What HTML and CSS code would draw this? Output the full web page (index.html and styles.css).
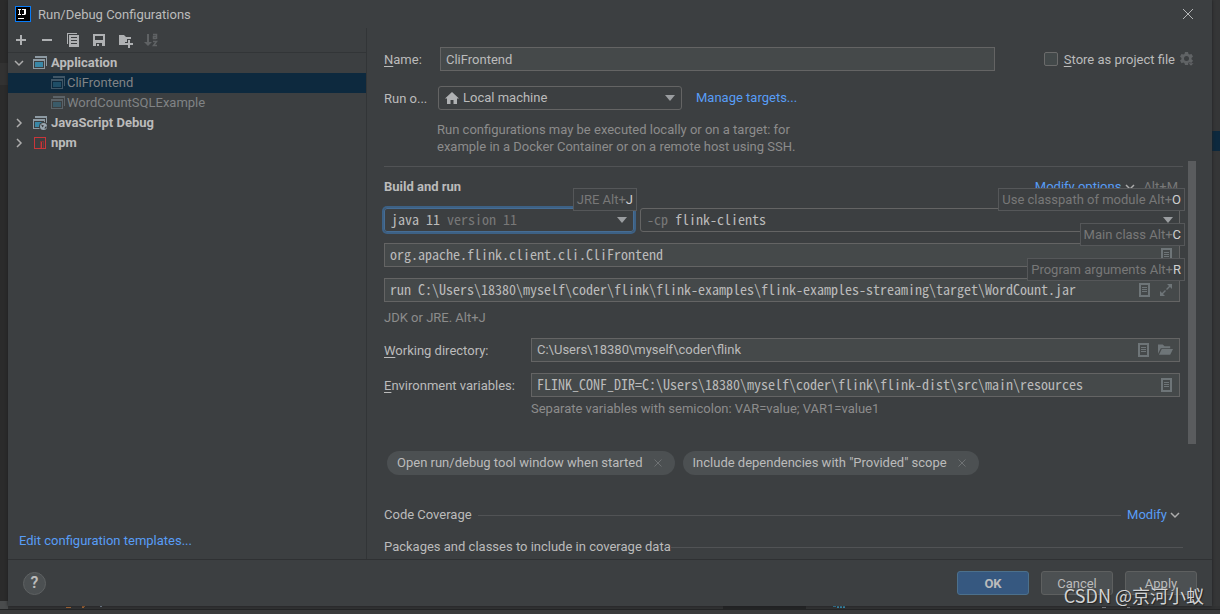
FILE: index.html
```html
<!DOCTYPE html>
<html lang="en">
<head>
<meta charset="utf-8">
<title>Run/Debug Configurations</title>
<link rel="stylesheet" href="styles.css">
</head>
<body>
<svg class="symbols" aria-hidden="true">
  <symbol id="i-app" viewBox="0 0 16 16"><path class="frame" d="M3 1h12v10h-1V3H3z"/><path class="frame" fill-rule="evenodd" d="M1 4h12v10H1zM2 6v7h10V6z"/><path class="pane" d="M3 7h8v5H3z"/></symbol>
  <symbol id="i-right" viewBox="0 0 10 10"><path d="M3 1l4 4-4 4" fill="none" stroke="#adadad" stroke-width="1.5"/></symbol>
  <symbol id="i-down" viewBox="0 0 10 10"><path d="M1 3l4 4 4-4" fill="none" stroke="#adadad" stroke-width="1.5"/></symbol>
  <symbol id="i-arrow" viewBox="0 0 10 6"><path d="M0 0h10L5 6z" fill="#9a9da0"/></symbol>
  <symbol id="i-doc" viewBox="0 0 12 14"><path fill="#6e7578" fill-rule="evenodd" d="M0 0h11v14H0zM2 2v10h7V2z"/><path fill="#6e7578" d="M3 4h5v1H3zM3 6h5v1H3zM3 8h5v1H3z"/></symbol>
  <symbol id="i-x" viewBox="0 0 8 8"><path d="M.5.5l7 7m0-7l-7 7" fill="none" stroke="#6e7173"/></symbol>
</svg>

<div class="backdrop" aria-hidden="true">
  <span class="caret-row"></span>
  <span class="gutter"></span>
  <span class="selection"></span>
  <svg class="code-edge" width="1220" height="13" viewBox="0 0 1220 13"><path fill="#323334" d="M0 5h1220v3H0z"/><path fill="#242526" d="M723 5h83v3h-83zM0 8h1220v1H0z"/><path fill="#4a4c4d" d="M0 0h8v8H0z"/><path fill="#b06b35" d="M66 6h5v1h-5zM82 5h3v1h-1v1h-2z"/><path fill="#8fa1b3" d="M100 5h2v1h-2z"/><path fill="#3993b8" d="M833 5h3v1h-3zM837 5h2v2h-2zM840 5h2v2h-2zM843 5h2v2h-2z"/><path fill="#84898d" d="M1102 6h4v1h-4zM1127 6h3v1h-3z"/></svg>
</div>

<main class="dialog">
  <header class="titlebar">
    <svg width="16" height="16" viewBox="0 0 16 16"><path fill="#087cfa" d="M0 0h16v16H0z"/><path fill="#000" d="M1 1h14v14H1z"/><path fill="#fff" d="M3 3h3v1H5v4h1v1H3V8h1V4H3zM7 3h4v5l-1 1H7V8h2V4H7zM3 12h6v1H3z"/></svg>
    <h1>Run/Debug Configurations</h1>
    <button class="icon-btn close" aria-label="Close"><svg width="12" height="12" viewBox="0 0 12 12"><path d="M1 1l10 10M11 1L1 11" stroke="#b4b6b7" fill="none"/></svg></button>
  </header>

  <div class="columns">
    <aside class="sidebar">
      <div class="toolbar">
        <button class="icon-btn" aria-label="Add"><svg width="16" height="16"><path fill="#afb1b3" d="M7 3h2v4h4v2H9v4H7V9H3V7h4z"/></svg></button>
        <button class="icon-btn" aria-label="Remove"><svg width="16" height="16"><path fill="#afb1b3" d="M3 7h10v2H3z"/></svg></button>
        <button class="icon-btn" aria-label="Copy"><svg width="16" height="16"><path fill="#afb1b3" d="M2 1h10v1H3v10H2z"/><path fill="#afb1b3" fill-rule="evenodd" d="M4 3h10v12H4zM6 5v1h6V5zM6 8v1h6V8zM6 11v1h6v-1z"/></svg></button>
        <button class="icon-btn" aria-label="Save"><svg width="16" height="16"><path fill="#afb1b3" fill-rule="evenodd" d="M2 2h12v12H2zM4 4v4h8V4zM5 11v3h1v-2h2v2h3v-3z"/></svg></button>
        <button class="icon-btn" aria-label="New folder"><svg width="16" height="16"><path fill="#afb1b3" d="M2 3h5l2 2h5v4h-3v2H9v2H2z"/><path fill="#3c3f41" d="M10 7h4v3h2v4h-2v2h-4v-2H8v-4h2z"/><path fill="#afb1b3" d="M11 8h2v3h3v2h-3v3h-2v-3H8v-2h3z"/></svg></button>
        <button class="icon-btn" aria-label="Sort" disabled><svg width="16" height="16"><path fill="#5f6264" d="M4 2h2v8h3l-4 4-4-4h3z"/><path fill="none" stroke="#5f6264" stroke-width="1.5" d="M10 2.500h3.500V7M13 4.500h-2.500v2H13M10 9.500h3.500l-3 4H14"/></svg></button>
      </div>
      <ul class="tree">
        <li class="node group"><svg class="twist" width="10" height="10"><use href="#i-down"/></svg><svg class="kind" width="16" height="16"><use href="#i-app"/></svg>Application</li>
        <li class="node leaf selected"><svg class="kind" width="16" height="16"><use href="#i-app"/></svg>CliFrontend</li>
        <li class="node leaf"><svg class="kind" width="16" height="16"><use href="#i-app"/></svg>WordCountSQLExample</li>
        <li class="node group"><svg class="twist" width="10" height="10"><use href="#i-right"/></svg><svg class="kind" width="16" height="16"><use href="#i-app"/><circle cx="11.500" cy="11.500" r="4.500" fill="#3c3f41"/><circle cx="11.500" cy="11.500" r="3.500" fill="#9aa7b0"/><path d="M9 9.500l3 1-1.500 2zM13 12l1.500-1v2l-2 1z" fill="#3c3f41"/></svg>JavaScript Debug</li>
        <li class="node group"><svg class="twist" width="10" height="10"><use href="#i-right"/></svg><svg class="kind" width="16" height="16"><path fill="#c9363a" fill-rule="evenodd" d="M2 2h12v12H2zM3 3v10h10V3z"/><path fill="#823234" d="M8 6h4v7h-1V7H9v6H8z"/><path fill="#c9363a" d="M9 7h1v6H9z"/></svg>npm</li>
      </ul>
      <a class="link templates" href="#">Edit configuration templates...</a>
    </aside>

    <section class="panel">
      <div class="head">
        <div class="row name-row">
          <label class="name-label" for="name"><u>N</u>ame:</label>
          <input class="box name-input" id="name" type="text" value="CliFrontend">
          <div class="store">
            <input id="store" type="checkbox"><label for="store"><u>S</u>tore as project file</label>
            <svg width="16" height="16"><path fill="#606365" fill-rule="evenodd" d="M6 1h3l.5 2 1 .6 2-.6 1.500 2.600L12.500 7v1.200L14 9.600l-1.500 2.600-2-.6-1 .6L9 14H6l-.5-1.800-1-.6-2 .6L1 9.600l1.500-1.400V7L1 5.600 2.500 3l2 .6 1-.6zM7.500 5a2.500 2.500 0 1 0 0 5 2.500 2.500 0 0 0 0-5z"/><path d="M9 12h6l-3 3z" fill="#606365" stroke="#3c3f41" stroke-width=".5"/></svg>
          </div>
        </div>
        <div class="row target-row">
          <label class="target-label" for="target">Run o...</label>
          <div class="combo target-combo">
            <svg width="14" height="12"><path fill="#afb1b3" d="M7 0l7 6.500h-2V12H8.500V8h-3v4H2V6.500H0z"/></svg>
            <select id="target"><option>Local machine</option></select>
            <svg class="arrow" width="10" height="6"><use href="#i-arrow"/></svg>
          </div>
          <a class="link" href="#">Manage targets...</a>
        </div>
        <p class="hint target-hint">Run configurations may be executed locally or on a target: for<br>example in a Docker Container or on a remote host using SSH.</p>
      </div>

      <div class="scroller">
        <div class="form">
          <div class="section-title">
            <h2>Build and run</h2>
            <a class="link" href="#">Modify options</a>
            <svg width="10" height="10"><use href="#i-down"/></svg>
            <span class="shortcut">Alt+M</span>
          </div>
          <div class="fields">
            <div class="pair">
              <div class="combo mono focused">
                <select aria-label="JRE"><option>java 11</option></select>
                <span class="muted">version 11</span>
                <svg class="arrow" width="10" height="6"><use href="#i-arrow"/></svg>
                <span class="tip">JRE Alt+<b>J</b></span>
              </div>
              <div class="combo mono classpath">
                <span class="muted">-cp</span>
                <select aria-label="Classpath of module"><option>flink-clients</option></select>
                <svg class="arrow" width="10" height="6"><use href="#i-arrow"/></svg>
                <span class="tip">Use classpath of module Alt+<b>O</b></span>
              </div>
            </div>
            <div class="box mono entry">
              <input type="text" aria-label="Main class" value="org.apache.flink.client.cli.CliFrontend">
              <button class="icon-btn" aria-label="Browse"><svg width="12" height="14"><use href="#i-doc"/></svg></button>
              <span class="tip">Main class Alt+<b>C</b></span>
            </div>
            <div class="box mono entry">
              <input type="text" aria-label="Program arguments" value="run C:\Users\18380\myself\coder\flink\flink-examples\flink-examples-streaming\target\WordCount.jar">
              <button class="icon-btn" aria-label="Macros"><svg width="12" height="14"><use href="#i-doc"/></svg></button>
              <button class="icon-btn" aria-label="Expand"><svg width="14" height="14"><path fill="#6e7578" d="M8 1h5v5l-2-2-3 3-1-1 3-3zM1 8l2 2 3-3 1 1-3 3 2 2H1z"/></svg></button>
              <span class="tip">Program arguments Alt+<b>R</b></span>
            </div>
          </div>
          <p class="hint jdk-hint">JDK or JRE. Alt+J</p>
          <div class="details">
            <label for="wd"><u>W</u>orking directory:</label>
            <div class="box entry">
              <input id="wd" type="text" value="C:\Users\18380\myself\coder\flink">
              <button class="icon-btn" aria-label="Macros"><svg width="12" height="14"><use href="#i-doc"/></svg></button>
              <button class="icon-btn" aria-label="Browse folder"><svg width="15" height="14" viewBox="0 0 16 14"><path fill="#6e7578" d="M0 1h5l2 2h6v2H3l-3 6z"/><path fill="#6e7578" d="M4 6h12l-3 6H1z"/></svg></button>
            </div>
            <label for="env"><u>E</u>nvironment variables:</label>
            <div class="box mono entry">
              <input id="env" type="text" value="FLINK_CONF_DIR=C:\Users\18380\myself\coder\flink\flink-dist\src\main\resources">
              <button class="icon-btn" aria-label="Edit variables"><svg width="12" height="14"><use href="#i-doc"/></svg></button>
            </div>
          </div>
          <p class="hint env-hint">Separate variables with semicolon: VAR=value; VAR1=value1</p>
          <div class="chips">
            <span class="chip">Open run/debug tool window when started<button class="icon-btn" aria-label="Remove option"><svg width="8" height="8"><use href="#i-x"/></svg></button></span>
            <span class="chip">Include dependencies with "Provided" scope<button class="icon-btn" aria-label="Remove option"><svg width="8" height="8"><use href="#i-x"/></svg></button></span>
          </div>
          <div class="rule-row coverage"><span>Code Coverage</span><i></i><a class="link" href="#">Modify</a><svg width="10" height="10"><use href="#i-down"/></svg></div>
          <div class="rule-row packages"><span>Packages and classes to include in coverage data</span><i></i></div>
        </div>
        <div class="thumb"></div>
      </div>
    </section>
  </div>

  <footer class="footer">
    <button class="help" aria-label="Help">?</button>
    <button class="btn primary">OK</button>
    <button class="btn">Cancel</button>
    <button class="btn">Apply</button>
  </footer>
</main>
<div class="watermark">CSDN @京河小蚁</div>
</body>
</html>
```

FILE: styles.css
```css
* { box-sizing: border-box; }
body {
  margin: 0;
  height: 100vh;
  padding: 0 8px 8px;
  overflow: hidden;
  background: #2b2b2b;
  color: #bbbbbb;
  font: 13px/18px Roboto, "Noto Sans CJK SC", sans-serif;
}
input, select, button { font: inherit; color: inherit; }
h1, h2, p, ul { margin: 0; padding: 0; font-size: 13px; }
u { text-underline-offset: 2px; }
svg { flex: none; display: block; }
.symbols { position: absolute; width: 0; height: 0; }

/* Editor showing round the edges of the dialog */
.backdrop { position: absolute; inset: 0; z-index: -1; background: linear-gradient(90deg, #2b2b2b 50%, #353637 50%); }
.caret-row, .gutter, .selection, .code-edge { position: absolute; }
.caret-row { left: 0; top: 63px; width: 8px; height: 22px; background: #323232; }
.gutter { left: 0; right: 0; bottom: 0; height: 5px; background: #3a3b3c; }
.selection { right: 0; top: 131px; width: 8px; height: 20px; background: #0d293e; }
.code-edge { left: 0; bottom: 0; }

.dialog {
  height: 100%;
  display: flex;
  flex-direction: column;
  background: #3c3f41;
  box-shadow: 0 0 3px #1e1f20;
}
.titlebar { height: 28px; flex: none; display: flex; align-items: center; gap: 7px; padding: 0 18px 0 7px; }
.titlebar h1 { flex: 1; padding-top: 2px; font-weight: 400; }
.icon-btn { display: flex; padding: 0; border: 0; background: none; }

.columns { flex: 1; min-height: 0; display: flex; border-bottom: 1px solid #2f3133; }
.sidebar { width: 359px; flex: none; display: flex; flex-direction: column; border-right: 1px solid #323537; }
.toolbar { height: 25px; display: flex; align-items: center; gap: 10px; padding-left: 5px; border-bottom: 1px solid #323537; }
.tree { list-style: none; flex: 1; }
.node { height: 20px; display: flex; align-items: center; }
.node .kind { margin-right: 3px; }
.group { padding-left: 6px; font-weight: 700; }
.twist { margin-right: 8px; }
.leaf { padding-left: 42px; color: #808385; }
.leaf .kind { margin-right: 1px; opacity: .4; }
.selected { background: #0d293e; }
.frame { fill: #8d9aa3; }
.pane { fill: #3a87a6; }
.link { color: #589df6; text-decoration: none; }
.templates { padding: 0 0 9px 11px; }

.panel { flex: 1; min-width: 0; display: flex; flex-direction: column; padding-left: 17px; }
.head { padding: 19px 0 6px; }
.row { display: flex; align-items: center; height: 24px; }
.row label, .details label { padding-top: 2px; }
.name-row { padding-right: 17px; }
.name-label { width: 56px; }
.box { height: 24px; background: #45494a; border: 1px solid #646464; }
.name-input { flex: 1; min-width: 0; padding: 0 5px; }
.store { display: flex; align-items: center; margin-left: 49px; }
.store input { appearance: none; width: 14px; height: 14px; margin: 0 6px 0 0; border: 1px solid #6b6b6b; border-radius: 2px; background: #43494a; }
.store svg { margin-left: 4px; }
.target-row { margin-top: 15px; }
.target-label { width: 54px; }
.combo { position: relative; height: 24px; display: flex; align-items: center; padding: 0 6px; border: 1px solid #646464; border-radius: 3px; }
.combo select { appearance: none; padding: 0; margin: 0; border: 0; background: none; outline: none; }
.arrow { margin-left: auto; }
.target-combo { width: 244px; margin-right: 14px; }
.target-combo select { margin-left: 4px; }
.hint { color: #8c8c8c; }
.target-hint { margin-top: 11px; padding-left: 53px; line-height: 17px; }

.scroller { flex: 1; min-height: 0; display: flex; align-items: flex-start; gap: 5px; padding-right: 16px; }
.form { flex: 1; min-width: 0; margin-top: 5px; border-top: 1px solid #515355; }
.thumb { width: 8px; height: 71%; background: #5a5c5e; }
.section-title { display: flex; align-items: center; padding: 11px 5px 0 0; }
.section-title h2 { flex: 1; }
.section-title svg { margin: 0 8px 0 4px; }
.shortcut, .muted { color: #787878; }
.fields { display: grid; gap: 11px; margin-top: 12px; padding-right: 3px; }
.pair { display: flex; gap: 6px; }
.mono { font-family: "Noto Sans Mono CJK SC", "DejaVu Sans Mono", monospace; font-size: 14px; }
.combo.mono select, .mono input, .mono .muted { padding-bottom: 2px; }
.combo.mono select { height: 20px; }
.focused { width: 250px; border-color: #466d94; box-shadow: 0 0 0 2px #3d6185; }
.focused .muted, .classpath select { margin-left: 7px; }
.classpath { flex: 1; }
.entry { position: relative; display: flex; align-items: center; gap: 8px; padding: 0 6px 0 5px; }
.entry input { flex: 1; min-width: 0; height: 20px; padding-top: 0; padding-left: 0; padding-right: 0; border: 0; outline: none; background: none; }
.tip {
  position: absolute;
  right: -6px;
  top: -21px;
  height: 23px;
  padding: 0 3px;
  background: #3c3f41;
  border: 1px solid #555759;
  color: #787878;
  font: 13px/21px Roboto, sans-serif;
  white-space: nowrap;
  z-index: 1;
}
.focused .tip { right: -4px; }
.tip b { font-weight: 400; color: #d0d0d0; }
.jdk-hint { margin-top: 7px; }
.details { display: grid; grid-template-columns: 147px 1fr; gap: 11px 0; align-items: center; margin-top: 11px; padding-right: 3px; }
.env-hint { margin-top: 3px; padding-left: 147px; }
.chips { display: flex; gap: 8px; margin-top: 33px; padding-left: 3px; }
.chip { height: 24px; display: flex; align-items: center; gap: 11px; padding: 0 13px 0 10px; border-radius: 12px; background: #4c5052; }
.rule-row { display: flex; align-items: center; }
.rule-row i { flex: 1; height: 1px; background: #515355; }
.coverage { margin-top: 31px; padding-right: 3px; gap: 6px; }
.coverage svg { margin-left: -3px; }
.packages { margin-top: 14px; }

.footer { height: 46px; flex: none; display: flex; align-items: center; gap: 12px; padding: 0 15px; }
.help { width: 23px; height: 23px; margin-right: auto; padding: 0; border: 1px solid #5e6162; border-radius: 50%; background: #4c5052; font-weight: 600; font-size: 16px; line-height: 20px; }
.btn { width: 72px; height: 24px; padding: 2px 0 0; border: 1px solid #5e6060; border-radius: 3px; background: #4c5052; }
.primary { background: #365880; border-color: #4c708c; font-weight: 700; }
.watermark {
  position: absolute;
  right: 16px;
  bottom: 6px;
  color: #d2d3d4;
  font: 18px/26px "Noto Sans CJK SC", sans-serif;
  text-shadow: 1px 1px 1px #222;
  pointer-events: none;
}
```
